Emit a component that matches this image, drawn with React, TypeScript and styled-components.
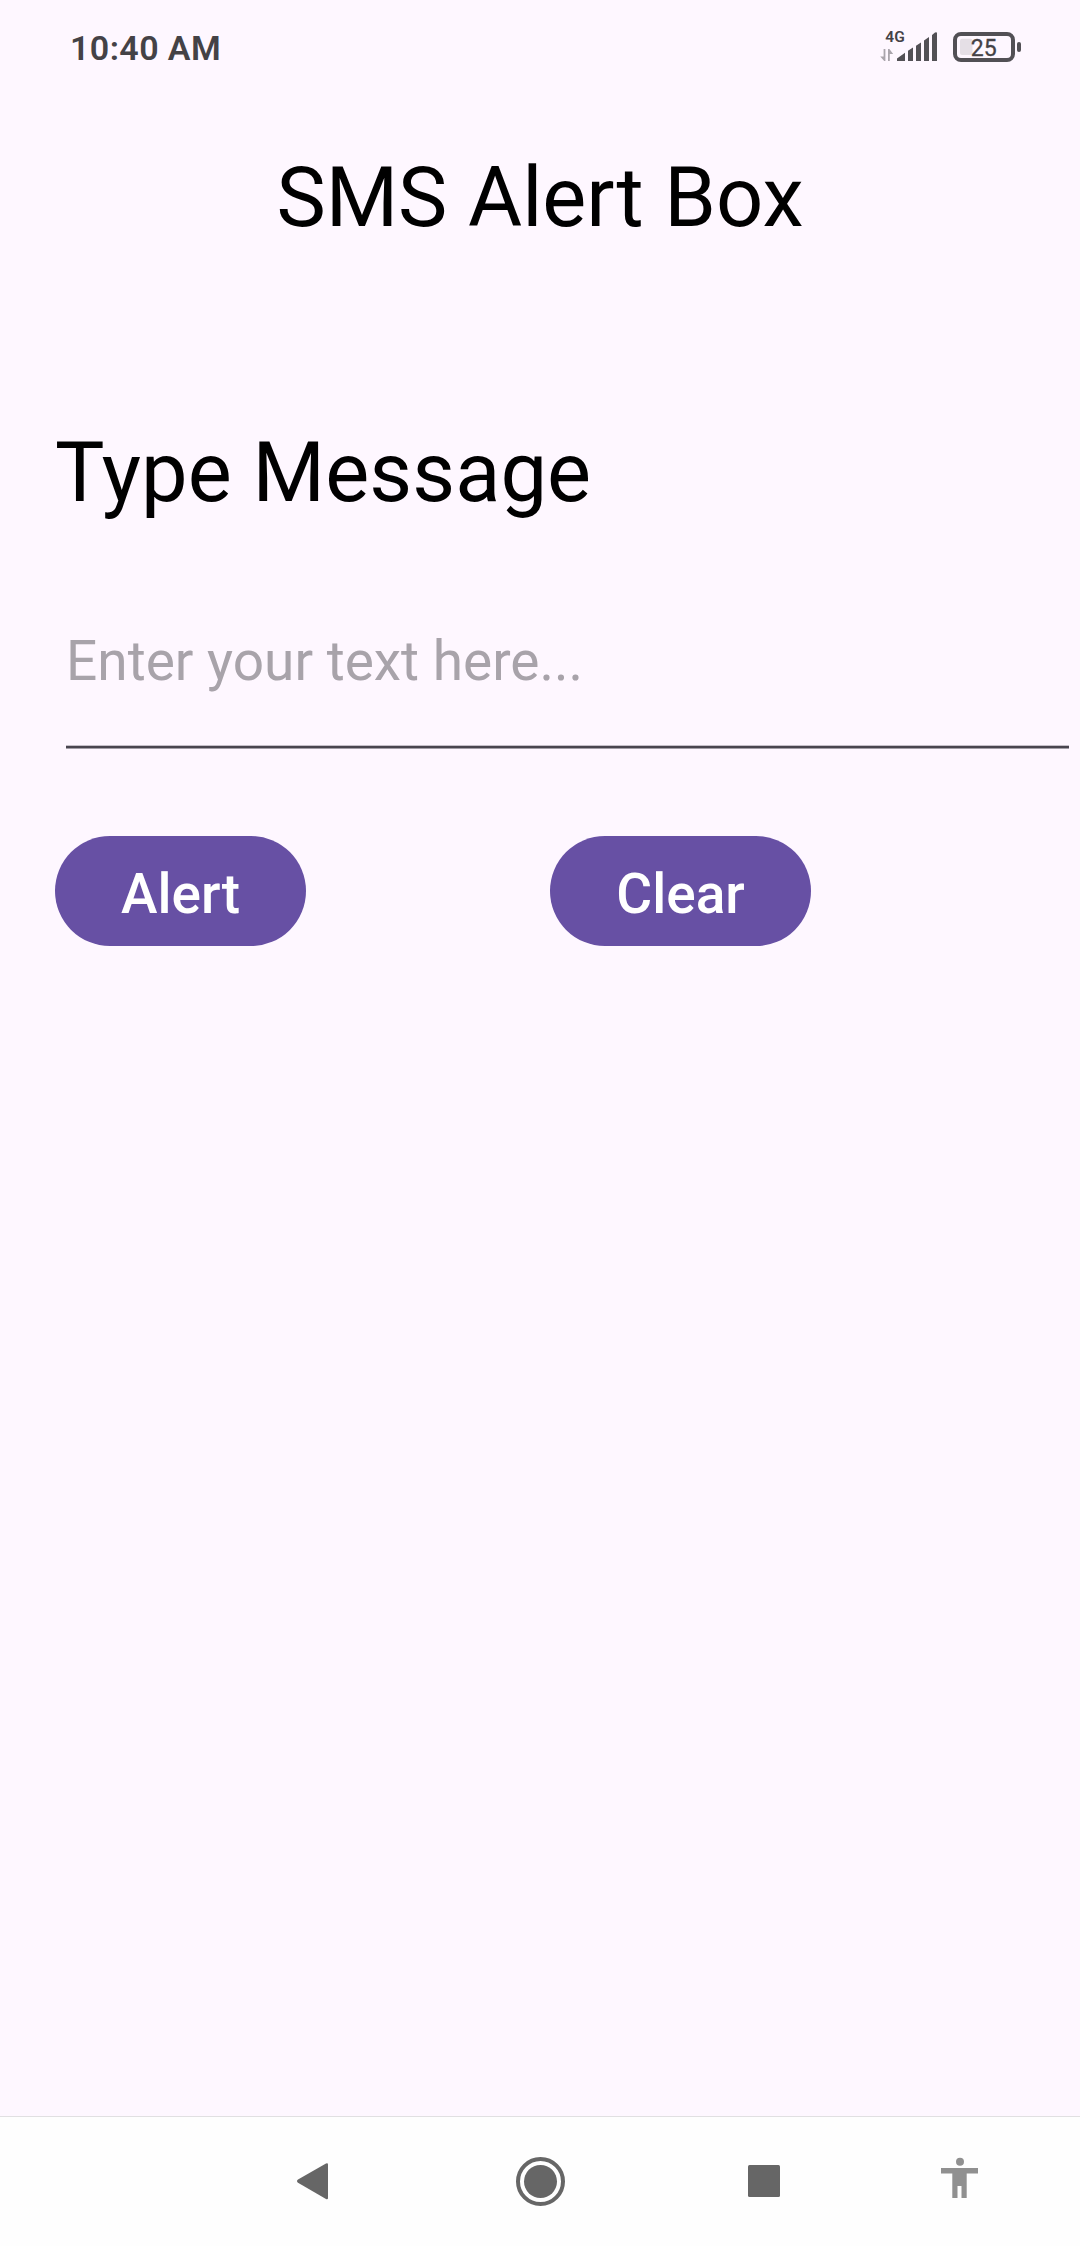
import React from "react";
import styled, { createGlobalStyle } from "styled-components";

const GlobalStyle = createGlobalStyle`
  * { box-sizing: border-box; }
  body { margin: 0; background: #fef7ff; }
`;

const Screen = styled.div`
  display: flex;
  flex-direction: column;
  width: 1080px;
  height: 2246px;
  background: #fef7ff;
  color: #000;
  font-family: Roboto, sans-serif;
  overflow: hidden;
`;

const StatusBar = styled.header`
  display: flex;
  justify-content: space-between;
  height: 96px;
  padding: 24px 58px 0 70px;
`;

const Clock = styled.time`
  font-size: 34px;
  line-height: 48px;
  font-weight: 600;
  letter-spacing: 0.4px;
  color: #444246;
`;

const StatusIcons = styled.svg`
  display: block;
  width: 142px;
  height: 44px;
`;

const Title = styled.h1`
  margin: 0;
  padding-top: 53px;
  font-size: 83px;
  line-height: 98px;
  font-weight: 400;
  text-align: center;
`;

const Form = styled.main`
  display: flex;
  flex-direction: column;
  flex: 1;
  padding: 177px 11px 0 55px;
`;

const Label = styled.label`
  font-size: 83px;
  line-height: 98px;
  letter-spacing: 0.1px;
`;

const MessageInput = styled.input`
  height: 130px;
  margin: 93px 0 0 11px;
  padding: 0 0 38px;
  border: 0;
  outline: 0;
  border-radius: 0;
  background: transparent;
  color: #1d1b20;
  font: 400 55px/64px Roboto, sans-serif;
  &::placeholder { color: #a8a3aa; opacity: 1; }
`;

const Underline = styled.div`
  height: 4px;
  margin-left: 11px;
  background: #49454f;
  border-top: 1px solid #c5bfc8;
  border-bottom: 1px solid #a29da6;
`;

const Actions = styled.div`
  display: flex;
  gap: 244px;
  margin-top: 87px;
`;

const PillButton = styled.button<{ $width: number }>`
  width: ${(p) => p.$width}px;
  height: 110px;
  padding: 6px 0 0;
  border: 0;
  border-radius: 55px;
  background: #6750a4;
  color: #fff;
  font: 500 55px/64px Roboto, sans-serif;
  white-space: nowrap;
`;

const NavBar = styled.nav`
  height: 130px;
  border-top: 1px solid #e1e0e2;
  background: #fefefe;
`;

const NavIcons = styled.svg`
  display: block;
  width: 1080px;
  height: 129px;
`;

export default function App() {
  return (
    <Screen>
      <GlobalStyle />
      <StatusBar>
        <Clock>10:40 AM</Clock>
        <StatusIcons viewBox="880 24 142 44" fontFamily="Roboto, sans-serif">
          <text x="885.3" y="42" fontSize="15.5" fontWeight="600" fill="#444246">4G</text>
          <path d="M883.6 49h1.8v12h-1.2l-4-4.6h3.4zM888 61V49h1.4l3.8 5h-3.4v7z" fill="#aaa5ac" />
          <path d="M897 61v-2.5l8-5.8V61zM908 61V50.8l5-3.3V61zM916 61V45.8l5-3.3V61zM924 61V40.6l5-3.6V61zM932 61V35l3-2.6q2-.8 2 .8V61z" fill="#525055" />
          <rect x="955" y="34" width="58" height="26" rx="6" fill="none" stroke="#525055" strokeWidth="4" />
          <rect x="960" y="38.7" width="12.5" height="16.3" rx="2" fill="#e5dfe6" />
          <rect x="1017" y="42" width="4" height="10" rx="2" fill="#525055" />
          <text x="970.8" y="56" fontSize="23" fill="#444246" stroke="#444246" strokeWidth="0.3">25</text>
        </StatusIcons>
      </StatusBar>
      <Title>SMS Alert Box</Title>
      <Form>
        <Label htmlFor="message">Type Message</Label>
        <MessageInput id="message" placeholder="Enter your text here..." />
        <Underline />
        <Actions>
          <PillButton $width={251}>Alert</PillButton>
          <PillButton $width={261}>Clear</PillButton>
        </Actions>
      </Form>
      <NavBar>
        <NavIcons viewBox="0 2117 1080 129" fill="#666">
          <path d="M298 2179.6 326 2163.5q2-.8 2 1.2v33.2q0 2-2 1.2L298 2182.8q-2-1.6 0-3.2z" />
          <circle cx="540.5" cy="2181.5" r="22.5" fill="none" stroke="#666" strokeWidth="4" />
          <circle cx="540.5" cy="2181.5" r="16.5" />
          <rect x="748" y="2165" width="32" height="32" rx="1.5" />
          <g fill="#909090">
            <circle cx="960" cy="2161.8" r="4" />
            <path d="M941 2168h37v5.5h-11.3V2198h-5.2v-12h-4v12h-5.2v-24.5H941z" />
          </g>
        </NavIcons>
      </NavBar>
    </Screen>
  );
}
